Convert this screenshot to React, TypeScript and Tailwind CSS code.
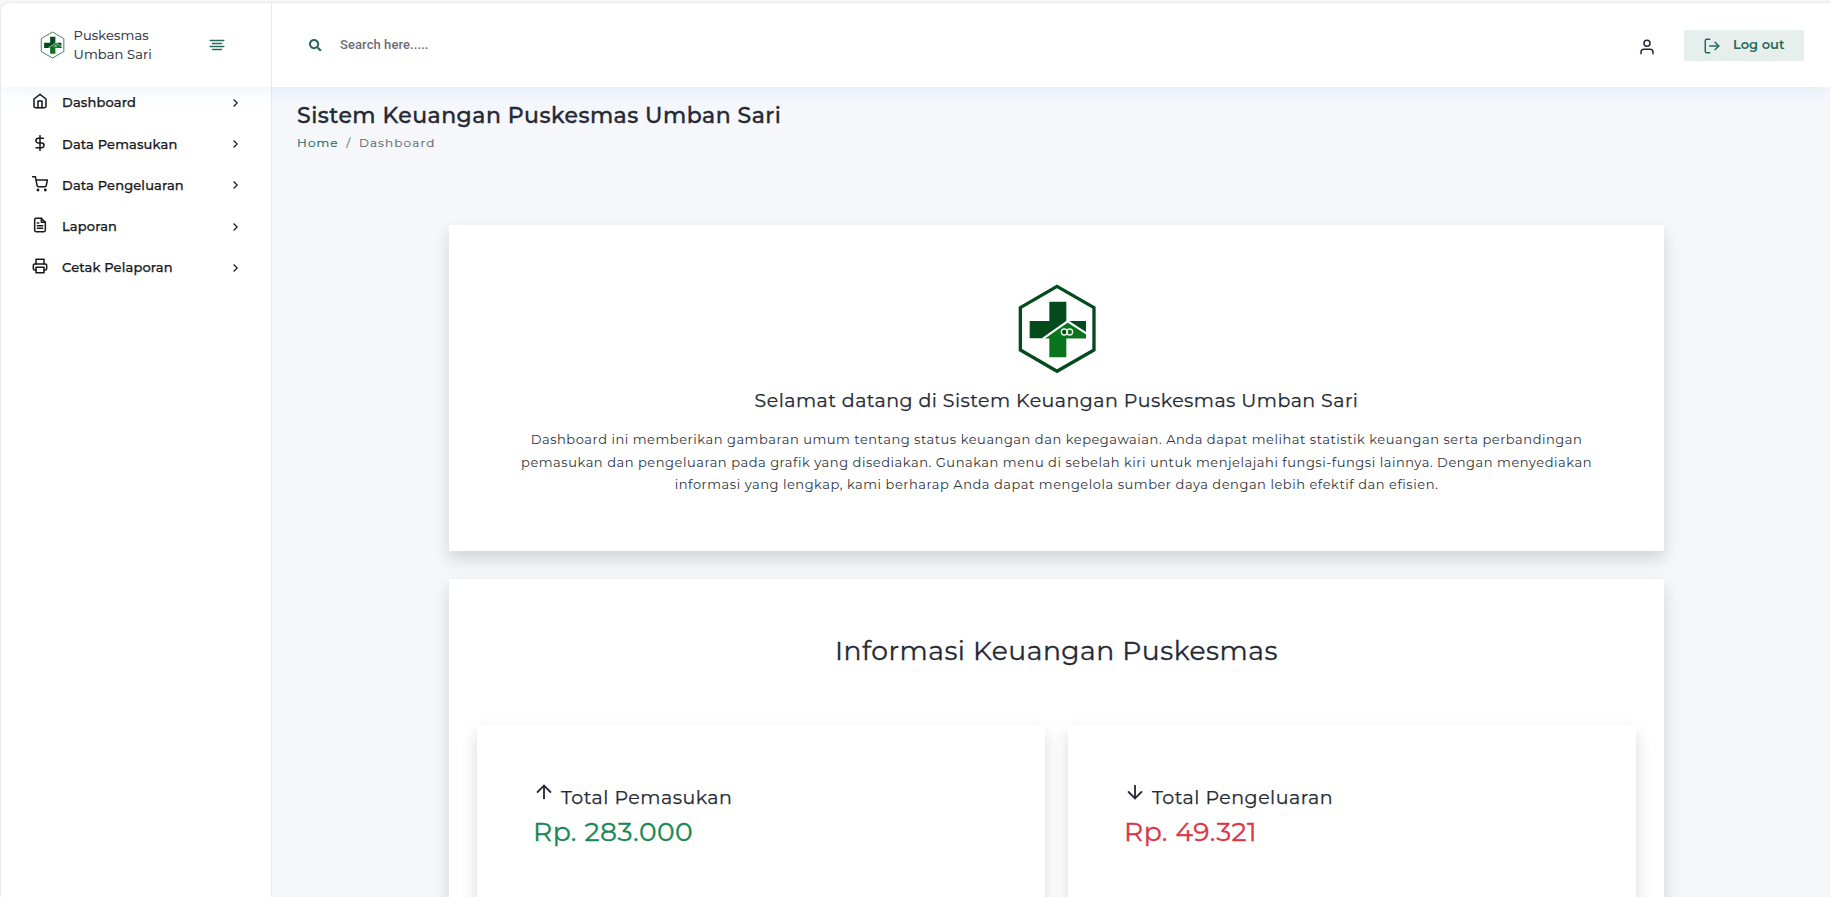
import type { ReactNode } from 'react';
import {
  FiAlignCenter,
  FiArrowDown,
  FiArrowUp,
  FiDollarSign,
  FiFileText,
  FiHome,
  FiLogOut,
  FiPrinter,
  FiShoppingCart,
  FiUser,
} from 'react-icons/fi';
import { FaSearch } from 'react-icons/fa';

function Logo({ className, stroke, color }: { className: string; stroke: number; color: string }) {
  return (
    <svg viewBox="110 68 240 274" className={className} aria-hidden="true">
      <path d="M230 78 L341 142 V269 L230 333 L120 269 V142 Z" fill="none" stroke={color} strokeWidth={stroke} />
      <path d="M207 124 H258 V182 H317 V234 H148 V182 H207 Z" fill="#034b1c" />
      <path d="M192 234 L262 185 L317 222 V234 H258 V291 H207 V234 Z" fill="#08741d" />
      <path d="M188 235 L262 183 L318 219" fill="none" stroke="#fff" strokeWidth="6" />
      <circle cx="252" cy="215" r="9" fill="#034b1c" stroke="#e9f5ea" strokeWidth="4" />
      <circle cx="268" cy="215" r="9" fill="none" stroke="#e9f5ea" strokeWidth="4" />
    </svg>
  );
}

const menu = [
  { label: 'Dashboard', Icon: FiHome },
  { label: 'Data Pemasukan', Icon: FiDollarSign },
  { label: 'Data Pengeluaran', Icon: FiShoppingCart },
  { label: 'Laporan', Icon: FiFileText },
  { label: 'Cetak Pelaporan', Icon: FiPrinter },
];

function StatCard({ icon, label, children }: { icon: ReactNode; label: string; children: ReactNode }) {
  return (
    <div className="h-[240px] bg-white pl-[56px] pt-[56px] shadow-[0_8px_16px_rgba(0,0,0,0.15)]">
      <div className="flex items-start text-[#242934]">
        {icon}
        <span className="ml-[6px] mt-[5px] text-[19px] leading-6 tracking-[0.5px] [-webkit-text-stroke:0.25px]">{label}</span>
      </div>
      {children}
    </div>
  );
}

export default function App() {
  return (
    <div className="h-[897px] w-[1830px] overflow-hidden bg-[#f6f6f6] pt-[2px] font-['Montserrat','Inter',sans-serif]">
      <div className="flex h-[895px] flex-col overflow-hidden rounded-tl-[10px] border-l border-t border-[#eaeaea] bg-white">
        <header className="relative z-10 flex h-[84px] shrink-0 bg-white shadow-[0_0_20px_rgba(89,162,222,0.15)]">
          <div className="flex w-[271px] items-center border-r border-[#e1ecee] pl-[38.5px]">
            <Logo className="h-[28px] w-[25px]" stroke={9} color="#37794f" />
            <div className="ml-[9px] w-[100px] text-[13px] leading-[19px] tracking-[0.14px] text-[#2b2f3b] [-webkit-text-stroke:0.15px]">
              Puskesmas
              <br />
              Umban Sari
            </div>
            <FiAlignCenter className="ml-[34px] size-[18px] text-[#24695c]" />
          </div>
          <div className="flex flex-1 items-start pl-[37px] pr-[26px]">
            <FaSearch className="mt-[35.5px] size-[12.5px] text-[#24695c]" />
            <span className="ml-[18.5px] mt-[32px] font-['Roboto'] text-[13px] font-medium leading-5 tracking-[0.08px] text-[#6c6c78]">
              Search here.....
            </span>
            <FiUser className="ml-auto mt-[34.5px] size-[18px] text-[#242934]" />
            <button className="ml-[28px] mt-[27px] flex h-[31px] w-[120px] items-start rounded-[3px] bg-[#e7efed] pl-[18.5px] text-[#24695c]">
              <FiLogOut className="mt-[7px] size-[18px]" />
              <span className="ml-[12.5px] mt-[4px] text-[13px] font-semibold leading-5">Log out</span>
            </button>
          </div>
        </header>

        <div className="flex flex-1">
          <aside className="w-[271px] border-r border-[#e1ecee] bg-white pt-[5.3px]">
            <nav className="flex flex-col gap-[21.3px] pl-[31px] pr-[33px]">
              {menu.map(({ label, Icon }) => (
                <a key={label} className="flex h-5 items-center text-[#1a1a1d]">
                  <Icon className="mb-[2px] size-4" strokeWidth={2.3} />
                  <span className="ml-[14px] text-[13px] font-medium leading-5 tracking-[0.15px] [-webkit-text-stroke:0.25px]">{label}</span>
                  <svg viewBox="0 0 5 8" className="ml-auto mt-px h-[8px] w-[5px]" fill="none" stroke="currentColor" strokeWidth="1.2">
                    <path d="M0.6 0.5 L4.2 4 L0.6 7.5" />
                  </svg>
                </a>
              ))}
            </nav>
          </aside>

          <main className="flex-1 bg-[#f5f7fb]">
            <div className="h-[138px] pl-[25px] pt-[15px]">
              <h1 className="text-[22px] font-medium leading-7 tracking-[0.47px] text-[#242934] [-webkit-text-stroke:0.35px]">
                Sistem Keuangan Puskesmas Umban Sari
              </h1>
              <div className="mt-[4px] flex text-xs leading-[18px] tracking-[1.12px] [-webkit-text-stroke:0.2px]">
                <span className="text-[#24695c]">Home</span>
                <span className="mx-[7.5px] text-[#6c757d]">/</span>
                <span className="text-[#6c7076]">Dashboard</span>
              </div>
            </div>

            <div className="ml-[177px] w-[1215px]">
              <section className="flex h-[326px] flex-col items-center bg-white pt-[57.7px] shadow-[0_8px_16px_rgba(0,0,0,0.15)]">
                <Logo className="h-[91.3px] w-[80px]" stroke={10} color="#034b1c" />
                <h2 className="mt-[15px] text-[19px] leading-6 tracking-[0.46px] text-[#242934] [-webkit-text-stroke:0.25px]">
                  Selamat datang di Sistem Keuangan Puskesmas Umban Sari
                </h2>
                <p className="mt-[15.5px] whitespace-nowrap text-center text-[13px] leading-[22.4px] tracking-[0.54px] text-[#2f333c]">
                  Dashboard ini memberikan gambaran umum tentang status keuangan dan kepegawaian. Anda dapat melihat statistik keuangan serta perbandingan
                  <br />
                  pemasukan dan pengeluaran pada grafik yang disediakan. Gunakan menu di sebelah kiri untuk menjelajahi fungsi-fungsi lainnya. Dengan menyediakan
                  <br />
                  informasi yang lengkap, kami berharap Anda dapat mengelola sumber daya dengan lebih efektif dan efisien.
                </p>
              </section>

              <section className="mt-[28px] h-[400px] bg-white pt-[55.5px] shadow-[0_8px_16px_rgba(0,0,0,0.15)]">
                <h2 className="text-center text-[26.6px] leading-8 tracking-[0.5px] text-[#242934] [-webkit-text-stroke:0.3px]">
                  Informasi Keuangan Puskesmas
                </h2>
                <div className="mt-[58.5px] grid grid-cols-2 gap-[23px] px-[28px]">
                  <StatCard icon={<FiArrowUp className="size-[22px]" />} label="Total Pemasukan">
                    <div className="mt-[6px] text-[26.6px] leading-8 tracking-[0.5px] text-[#198754] [-webkit-text-stroke:0.35px]">Rp. 283.000</div>
                  </StatCard>
                  <StatCard icon={<FiArrowDown className="size-[22px]" />} label="Total Pengeluaran">
                    <div className="mt-[6px] text-[26.6px] leading-8 tracking-[0.5px] text-[#dc3545] [-webkit-text-stroke:0.35px]">Rp. 49.321</div>
                  </StatCard>
                </div>
              </section>
            </div>
          </main>
        </div>
      </div>
    </div>
  );
}
